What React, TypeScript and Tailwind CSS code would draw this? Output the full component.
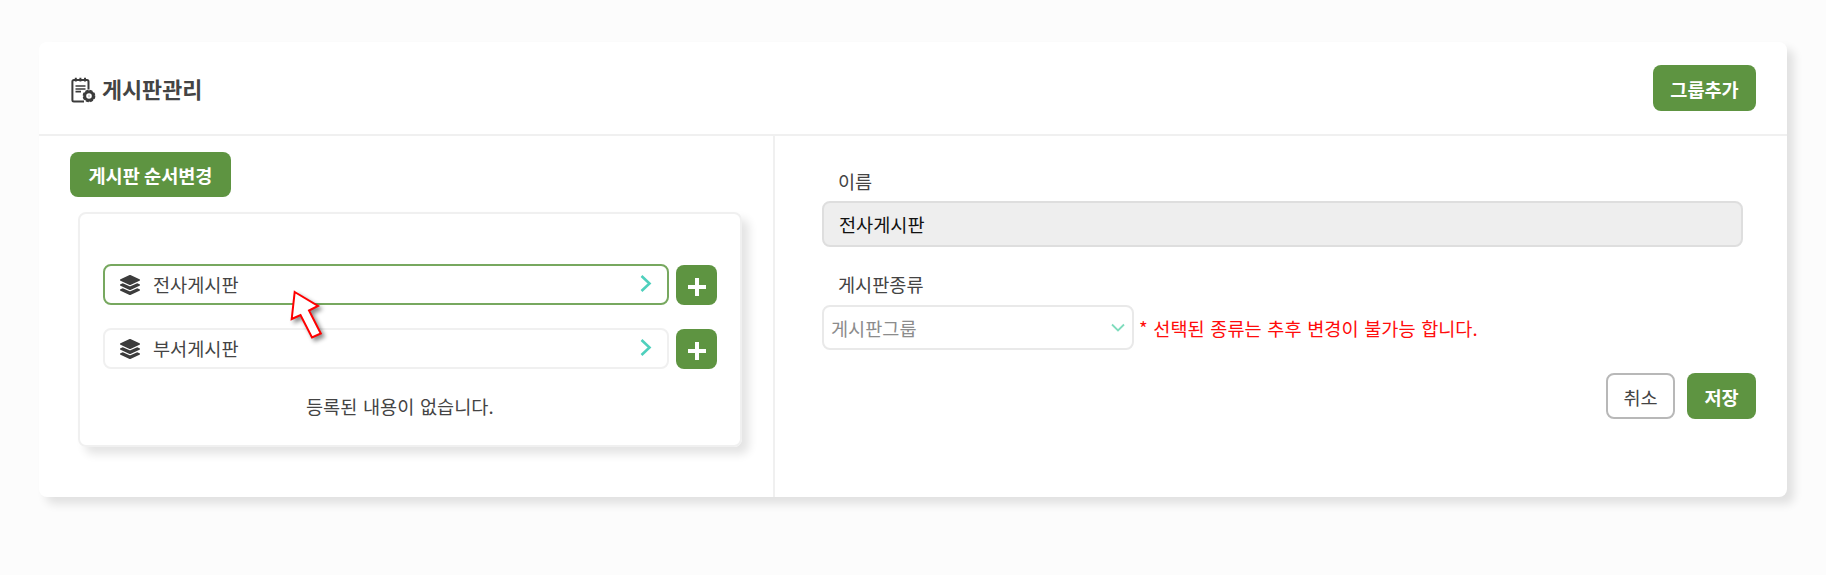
import React from "react";

function NoteIcon() {
  return (
    <svg width="25" height="26" viewBox="0 0 25 26" fill="none" stroke="#3c3c3c" className="mt-1 shrink-0">
      <path d="M13 24.500H2.900A1.500 1.500 0 0 1 1.400 23V4.500A1.500 1.500 0 0 1 2.900 3H16A1.500 1.500 0 0 1 17.500 4.500V12.500" strokeWidth="2" />
      <path d="M4.800 0.800V4.600M9.400 0.800V4.600M14 0.800V4.600" strokeWidth="2" />
      <path d="M4.500 9H14.500M4.500 12H14.500M4.500 14.600H10" strokeWidth="1.700" />
      <circle cx="18" cy="19" r="4.300" strokeWidth="3" />
      <circle cx="18" cy="19" r="5.700" strokeWidth="1.300" strokeDasharray="3 1.477" />
      <path d="M18 17.800V20.200" stroke="#aaa" strokeWidth="1" />
    </svg>
  );
}

function LayersIcon() {
  return (
    <svg width="20" height="20" viewBox="0 0 512 512" fill="#3c3c3c" className="shrink-0">
      <path d="M12.41 148.02l232.94 105.67c6.8 3.09 14.49 3.09 21.29 0l232.94-105.670c16.550-7.510 16.550-32.520 0-40.030L266.650 2.310a25.607 25.607 0 0 0-21.290 0L12.410 107.980c-16.550 7.510-16.550 32.530 0 40.040zm487.180 88.280l-58.090-26.330-161.640 73.270c-7.560 3.430-15.590 5.170-23.860 5.170s-16.290-1.740-23.860-5.170L70.510 209.970l-58.100 26.330c-16.550 7.500-16.550 32.500 0 40l232.940 105.590c6.800 3.080 14.490 3.080 21.290 0L499.590 276.300c16.550-7.500 16.550-32.500 0-40zm0 127.800l-57.870-26.230-161.860 73.370c-7.560 3.430-15.590 5.170-23.860 5.170s-16.290-1.740-23.860-5.170L70.290 337.870 12.410 364.100c-16.550 7.500-16.550 32.500 0 40l232.940 105.590c6.800 3.080 14.490 3.080 21.290 0L499.590 404.100c16.550-7.500 16.550-32.500 0-40z" />
    </svg>
  );
}

function BoardRow({ name, selected }: { name: string; selected?: boolean }) {
  return (
    <div className="flex items-start gap-[7px]">
      <div
        className={`flex h-[41px] w-[566px] items-center rounded-lg border-2 pl-[15px] pr-[15px] ${
          selected ? "border-[#77a85f]" : "border-[#f0f0f0]"
        }`}
      >
        <LayersIcon />
        <span className="mb-0.5 ml-[13px] grow leading-6">{name}</span>
        <svg width="12" height="18" viewBox="0 0 12 18" fill="none" stroke="#4fd0bd" strokeWidth="2.6" className="mb-1">
          <path d="M1.500 2L9.500 9.500L1.500 17" />
        </svg>
      </div>
      <button className="mt-px flex h-10 w-[41px] items-center justify-center rounded-lg bg-[#5e9441]">
        <svg width="18" height="18" viewBox="0 0 18 18" stroke="#fff" strokeWidth="4" className="mt-[3px]">
          <path d="M0 9H18M9 0V18" />
        </svg>
      </button>
    </div>
  );
}

const primary =
  "flex items-center justify-center rounded-lg bg-[#5e9441] font-bold text-white";

export default function App() {
  return (
    <div className="relative h-[575px] w-[1826px] overflow-hidden bg-[#fcfcfc] pl-[39px] pt-[42px] font-['Noto_Sans_CJK_KR',sans-serif] text-[18.600px] text-[#444] [word-spacing:1.500px]">
      <div className="flex h-[455px] w-[1748px] flex-col rounded-lg bg-white shadow-[7px_7px_10px_rgba(0,0,0,0.11)]">
        <header className="flex h-[94px] shrink-0 items-center justify-between border-b-2 border-[#f0f0f0] pl-8 pr-[31px]">
          <h1 className="flex items-center gap-1.5 text-[21.800px] font-bold leading-7 text-[#444]">
            <NoteIcon />
            <span className="mt-px">게시판관리</span>
          </h1>
          <button className={`${primary} h-[46px] w-[103px] pt-px`}>그룹추가</button>
        </header>
        <div className="flex grow">
          <section className="w-[736px] border-r-2 border-[#f0f0f0] pl-[31px] pt-4">
            <button className={`${primary} h-[45px] w-[161px]`}>게시판 순서변경</button>
            <div className="ml-2 mt-[15px] h-[235px] w-[664px] rounded-lg border-2 border-[#f0f0f0] pl-[23px] pt-[50px] shadow-[7px_7px_10px_rgba(0,0,0,0.11)]">
              <div className="flex flex-col gap-[23px]">
                <BoardRow name="전사게시판" selected />
                <BoardRow name="부서게시판" />
              </div>
              <p className="mt-6 pl-[203px] leading-[26px]">등록된 내용이 없습니다.</p>
            </div>
          </section>
          <section className="grow pl-[47px] pt-8">
            <label className="block h-[33px] pl-4 leading-[26px]">이름</label>
            <div className="flex h-[46px] w-[921px] items-center rounded-lg border-2 border-[#dedede] bg-[#eee] pl-[15px] text-[#111]">
              전사게시판
            </div>
            <label className="mt-6 block h-[34px] pl-4 leading-[26px]">게시판종류</label>
            <div className="flex items-center">
              <div className="flex h-[45px] w-[312px] items-center justify-between rounded-lg border-2 border-[#e9e9e9] pl-[7px] pr-[7px] text-[#8c8c8c]">
                게시판그룹
                <svg width="14" height="10" viewBox="0 0 14 10" fill="none" stroke="#7fdcbd" strokeWidth="1.800">
                  <path d="M1 1.500L7 7.500L13 1.500" />
                </svg>
              </div>
              <p className="ml-[5px] text-[#ff0c0c]">* 선택된 종류는 추후 변경이 불가능 합니다.</p>
            </div>
            <div className="mt-[23px] flex justify-end gap-3 pr-[31px]">
              <button className="flex h-[46px] w-[69px] items-center justify-center rounded-lg border-2 border-[#b8b8b8] bg-white pt-px">
                취소
              </button>
              <button className={`${primary} h-[46px] w-[69px] pt-px`}>저장</button>
            </div>
          </section>
        </div>
      </div>
      <svg width="50" height="60" viewBox="0 0 50 60" className="absolute left-[284px] top-[284px] drop-shadow-[3px_3px_2px_rgba(0,0,0,0.45)]">
        <path d="M10.700 8L34 22L25 26.500L36.800 49.500L28 53.500L16.500 31L7.700 35Z" fill="#fff" stroke="#f00" strokeWidth="2" />
      </svg>
    </div>
  );
}
